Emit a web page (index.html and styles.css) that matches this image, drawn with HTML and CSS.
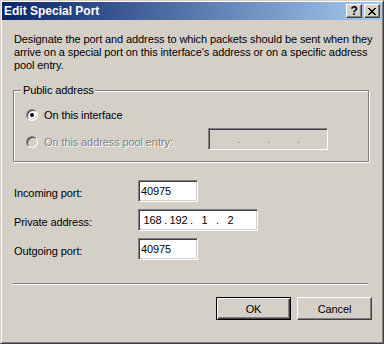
FILE: index.html
```html
<!DOCTYPE html>
<html lang="en">
<head>
  <meta charset="UTF-8" />
  <title>Edit Special Port</title>
  <link rel="stylesheet" href="styles.css">
</head>
<body>

<div class="window">
  <div class="titlebar">
    <span class="title">Edit Special Port</span>
    <div class="caption-btns">
      <div class="cap-btn help">?</div>
      <div class="cap-btn close">
        <svg width="8" height="7" viewBox="0 0 8 7" shape-rendering="crispEdges">
          <path d="M0 0h2v1h-2zM6 0h2v1h-2zM1 1h2v1h-2zM5 1h2v1h-2zM2 2h4v1h-4zM3 3h2v1h-2zM2 4h4v1h-4zM1 5h2v1h-2zM5 5h2v1h-2zM0 6h2v1h-2zM6 6h2v1h-2z" fill="#000"/>
        </svg>
      </div>
    </div>
  </div>

  <div class="content">
    <p class="intro">Designate the port and address to which packets should be sent when they<br>arrive on a special port on this interface's address or on a specific address<br>pool entry.</p>

    <div class="group">
      <span class="legend">Public address</span>
      <div class="radio-row">
        <span class="radio checked"></span>
        <span>On this interface</span>
      </div>
      <div class="radio-row pool">
        <div class="pool-label">
          <span class="radio disabled"></span>
          <span class="disabled-text">On this address pool entry:</span>
        </div>
        <div class="ipbox off">
          <span class="oct"></span><span class="dot">.</span>
          <span class="oct"></span><span class="dot">.</span>
          <span class="oct"></span><span class="dot">.</span>
          <span class="oct"></span>
        </div>
      </div>
    </div>

    <div class="fields">
      <div class="field">
        <label>Incoming port:</label>
        <div class="edit">40975</div>
      </div>
      <div class="field">
        <label>Private address:</label>
        <div class="ipbox">
          <span class="oct">168</span><span class="dot">.</span>
          <span class="oct">192</span><span class="dot">.</span>
          <span class="oct">1</span><span class="dot">.</span>
          <span class="oct">2</span>
        </div>
      </div>
      <div class="field">
        <label>Outgoing port:</label>
        <div class="edit">40975</div>
      </div>
    </div>

    <div class="separator"></div>

    <div class="buttons">
      <div class="btn default">OK</div>
      <div class="btn">Cancel</div>
    </div>
  </div>
</div>

</body>
</html>
```

FILE: styles.css
```css
body {
  margin: 0;
  font-family: "Liberation Sans", Arial, sans-serif;
  font-size: 11px;
  letter-spacing: -0.1px;
  color: #000;
  background: #d4d0c8;
}
.window {
  box-sizing: border-box;
  width: 384px;
  height: 344px;
  background: #d4d0c8;
  border: 1px solid;
  border-color: #d4d0c8 #404040 #404040 #d4d0c8;
  box-shadow: inset 1px 1px #fff, inset -1px -1px #808080;
  padding: 1px;
}
.titlebar {
  height: 18px;
  background: linear-gradient(90deg, #0a246a, #a6caf0);
  display: flex;
  align-items: center;
  justify-content: space-between;
  padding: 0 2px 0 2px;
}
.title {
  color: #fff;
  font-weight: bold;
  font-size: 12px;
  letter-spacing: 0;
}
.caption-btns { display: flex; gap: 2px; }
.cap-btn {
  box-sizing: border-box;
  width: 16px;
  height: 14px;
  background: #d4d0c8;
  border: 1px solid;
  border-color: #fff #404040 #404040 #fff;
  box-shadow: inset -1px -1px #808080;
  display: flex;
  align-items: center;
  justify-content: center;
}
.cap-btn.help {
  font-weight: bold;
  font-size: 12px;
  line-height: 12px;
}
.cap-btn.close svg { display: block; margin-top: 1px; }

.content {
  padding: 13px 10px 0 11px;
}
.intro {
  margin: 0;
  line-height: 13px;
  padding-left: 1px;
  white-space: nowrap;
}

.group {
  position: relative;
  box-sizing: border-box;
  width: 356px;
  height: 72px;
  margin-top: 18px;
  border: 1px solid #808080;
  box-shadow: inset 1px 1px #fff, 1px 1px #fff;
  padding: 17px 0 0 12px;
}
.legend {
  position: absolute;
  top: -7px;
  left: 7px;
  padding: 0 1px 0 2px;
  background: #d4d0c8;
  line-height: 13px;
}
.radio-row {
  display: flex;
  align-items: center;
  gap: 6px;
  height: 14px;
}
.radio-row.pool {
  height: 22px;
  margin-top: 6px;
  align-items: flex-start;
  gap: 0;
}
.pool-label {
  width: 182px;
  display: flex;
  align-items: center;
  gap: 6px;
  margin-top: 7px;
  height: 14px;
}
.radio {
  box-sizing: border-box;
  position: relative;
  width: 12px;
  height: 12px;
  border-radius: 50%;
  background: #fff;
  border: 1px solid;
  border-color: #808080 #fff #fff #808080;
  box-shadow: inset 1px 1px #404040, inset -1px -1px #d4d0c8;
  flex: none;
}
.radio.checked::after {
  content: "";
  position: absolute;
  left: 3px;
  top: 3px;
  width: 4px;
  height: 4px;
  border-radius: 50%;
  background: #000;
}
.radio.disabled { background: #d4d0c8; }
.disabled-text {
  color: #808080;
  text-shadow: 1px 1px #fff;
}

.ipbox, .edit {
  box-sizing: border-box;
  height: 22px;
  background: #fff;
  border: 1px solid;
  border-color: #808080 #fff #fff #808080;
  box-shadow: inset 1px 1px #404040, inset -1px -1px #d4d0c8;
}
.ipbox {
  width: 120px;
  display: flex;
  align-items: center;
  padding-left: 3px;
}
.ipbox.off {
  background: #d4d0c8;
  padding-left: 2px;
  color: #808080;
}
.ipbox .oct {
  width: 21px;
  text-align: center;
}
.ipbox.off .oct { width: 25px; }
.ipbox .dot {
  width: 5px;
  text-align: center;
}
.edit {
  width: 60px;
  padding: 0 2px;
  display: flex;
  align-items: center;
}

.fields {
  margin-top: 18px;
}
.field {
  display: flex;
  align-items: center;
  margin-bottom: 7px;
}
.field label {
  width: 124px;
  padding-left: 1px;
  padding-top: 3px;
}

.separator {
  width: 355px;
  height: 1px;
  background: #808080;
  border-bottom: 1px solid #fff;
  margin-top: 23px;
}

.buttons {
  display: flex;
  justify-content: flex-end;
  gap: 6px;
  margin-top: 12px;
}
.btn {
  box-sizing: border-box;
  width: 75px;
  height: 23px;
  display: flex;
  align-items: center;
  justify-content: center;
  background: #d4d0c8;
  border: 1px solid;
  border-color: #fff #404040 #404040 #fff;
  box-shadow: inset -1px -1px #808080;
}
.btn.default {
  border-color: #000;
  box-shadow: inset 1px 1px #fff, inset -1px -1px #404040, inset -2px -2px #808080;
}
```
